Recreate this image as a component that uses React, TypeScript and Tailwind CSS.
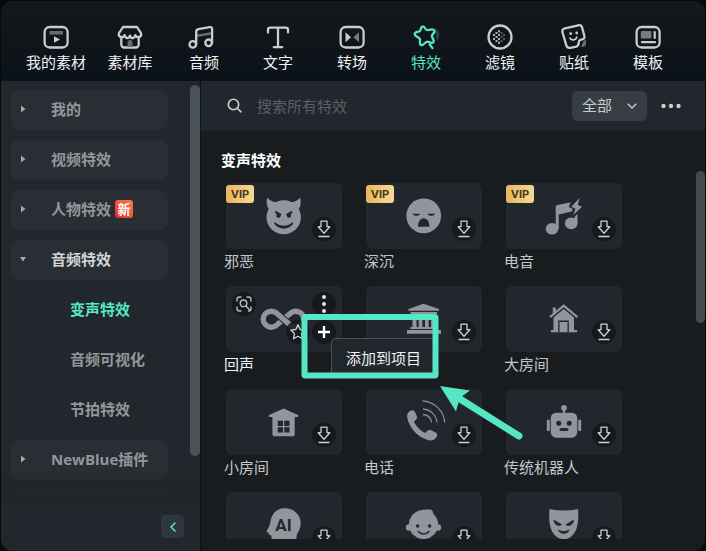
import { useState, type ReactNode } from "react";

const icons = {
  media: (
    <>
      <rect x="4.6" y="4" width="23" height="20.5" rx="5" />
      <rect x="9.5" y="8" width="13.5" height="3.6" fill="#666b72" stroke="none" />
      <path d="M14 13.2v6.6l6-3.3z" fill="#c9cdd2" stroke="none" />
    </>
  ),
  stock: (
    <>
      <path d="M9 4h14l4 6.2c.8 2.2-.6 3.9-2.7 3.9-1.6 0-2.4-.8-2.9-2-.6 2-1.7 3-3 3s-2-1-2.4-2.5c-.5 1.5-1.3 2.5-2.5 2.5s-2.3-1-2.9-3c-.5 1.2-1.3 2-2.9 2-2.1 0-3.5-1.7-2.7-3.9z" />
      <path d="M7.3 14v7.5a3 3 0 0 0 3 3h11.4a3 3 0 0 0 3-3V14" />
      <path d="M13.5 24v-4.5a2.5 2.5 0 0 1 5 0V24z" fill="#666b72" stroke="none" />
    </>
  ),
  audio: (
    <>
      <path d="m9 14 15-2.5V9L9 11.5z" fill="#666b72" stroke="none" />
      <circle cx="4.8" cy="21.4" r="3.3" />
      <circle cx="20.6" cy="19.8" r="3.3" />
      <path d="M8.2 21V9c0-1.5.7-2.5 2.2-2.8l11.2-2.1c1.5-.3 2.5.5 2.5 2V20" />
    </>
  ),
  text: (
    <path d="M6 9.5V6.7C6 5.3 7 4.600 8.2 4.600h15.6c1.2 0 2.2.7 2.2 2.1v2.8M16 4.600v19.5M11.8 24.2h8.4" />
  ),
  transition: (
    <>
      <rect x="4.6" y="4" width="23" height="20.5" rx="5" />
      <path d="M9.5 9.3v10l5.5-5z" fill="#c9cdd2" stroke="none" />
      <path d="M23 9.3v10l-5.5-5z" fill="#777b82" stroke="none" />
    </>
  ),
  effects: (
    <>
      <path d="M25 5c4 2 5.800 8 2.5 12.5-1-2.5-1.8-2.5-1.5-5z" fill="#1d4b44" stroke="none" />
      <path d="M12.3 3.7c1.7-.6 2.5.5 3.3 2.2.7 1.4 1.7 1.4 3.1 1 2-.6 4.5-1.2 5.5.4.9 1.5-.4 2.8-1.7 4.2-1 1.1-.8 2 0 3.3 1.1 1.9 2 3.5.7 4.7-1.2 1.1-2.8.3-4.6-.6-1.3-.7-2.2-.4-3.3.8-1.5 1.6-2.8 3-4.4 2.2-1.5-.8-1.2-2.5-.9-4.4.2-1.5-.3-2.3-1.7-3-2-1-3.9-2-3.6-3.7.3-1.6 2-1.9 3.9-2.1 1.5-.2 1.9-.9 2.1-2.3.3-1.3.4-2.3 1.6-2.7z" />
      <path d="m19.7 21.5 2.8 3.6" />
    </>
  ),
  filters: (
    <>
      <circle cx="16" cy="14" r="11.5" />
      <g fill="#aeb2b8" stroke="none">
        {[
          [10, 12], [10, 16], [12.5, 10], [12.5, 14], [12.5, 18], [15, 8.3], [15, 12], [15, 16], [15, 19.7],
        ].map(([x, y]) => (
          <rect key={`${x}-${y}`} x={x - 1} y={y - 1} width="2" height="2" />
        ))}
      </g>
      <g fill="#555a61" stroke="none">
        {[
          [17.5, 10], [17.5, 14], [17.5, 18], [20, 12], [20, 16],
        ].map(([x, y]) => (
          <rect key={`${x}-${y}`} x={x - 1} y={y - 1} width="2" height="2" />
        ))}
      </g>
    </>
  ),
  stickers: (
    <>
      <path d="M28 16.5v4.7c0 1.5-2 3-5.5 2.6 2.8-2 .5-4.5 5.5-7.3z" fill="#666b72" stroke="none" />
      <path d="m7 5.3 13.2-3c2-.4 3.4.4 3.9 2.2l2.2 8.2c.6 2.7-.4 3.5-3.2 4-1.8.3-2.2 1-2.3 2.8-.2 2.9-.9 4-3.4 4.4l-5.2.9c-2 .3-3.3-.5-3.9-2.4L4.5 9.3C4 7.2 4.9 5.800 7 5.3z" />
      <path d="M12 15.2c1.7 2.6 5.5 2.2 6.8-.9" strokeWidth="1.8" />
      <circle cx="12.7" cy="10.7" r="1.4" fill="#c9cdd2" stroke="none" />
      <circle cx="18.7" cy="10" r="1.4" fill="#c9cdd2" stroke="none" />
    </>
  ),
  templates: (
    <>
      <rect x="4.6" y="4" width="23" height="20.5" rx="5" />
      <rect x="8.8" y="8" width="10.6" height="7.6" rx="1" fill="#777b82" stroke="none" />
      <path d="M22.7 9v6M10 19.2h13" strokeWidth="2.2" />
    </>
  ),
};

const tabs = [
  { icon: icons.media, label: "我的素材" },
  { icon: icons.stock, label: "素材库" },
  { icon: icons.audio, label: "音频" },
  { icon: icons.text, label: "文字" },
  { icon: icons.transition, label: "转场" },
  { icon: icons.effects, label: "特效" },
  { icon: icons.filters, label: "滤镜" },
  { icon: icons.stickers, label: "贴纸" },
  { icon: icons.templates, label: "模板" },
];

// Artwork is drawn on the 116x66 thumbnail; dark parts reuse the card colour.
const CARD = "#21272d";

const art = {
  devil: (
    <>
      <path d="M41.3 14.5c2 2.500 4.500 4 7.500 4.600h17.800c3-.6 5.500-2.100 7.500-4.600 1.200 5 .6 9-1.600 12H43c-2.300-3-2.900-7-1.700-12z" />
      <ellipse cx="57.7" cy="34.3" rx="17.2" ry="17" />
      <g fill={CARD}>
        <path d="m49.5 27.8 6 3.3-1 2.2c-.5 2.2-3.7 2-4.1-.4l.1-2-1.5-1.3zM66 27.8l-6 3.3 1 2.2c.5 2.2 3.7 2 4.1-.4l-.1-2 1.5-1.3z" />
        <path d="M49 39c4.5 5 13 5 17.5 0 .8 1 .8 1.7.2 2.5-4.3 5.500-13.5 5.500-17.9 0-.7-.8-.7-1.6.2-2.5z" />
      </g>
    </>
  ),
  deep: (
    <>
      <circle cx="57.7" cy="32.8" r="17.4" />
      <g fill={CARD}>
        <path d="M46.5 30.7H54c-1 2.8-6.2 2.8-7.5 0zM61.5 30.7H69c-1 2.8-6.2 2.8-7.5 0z" />
        <path d="M52 43.8c-.3-5 2.5-8.500 5.700-8.500s6 3.5 5.700 8.500z" />
      </g>
    </>
  ),
  electro: (
    <>
      <ellipse cx="46" cy="45.8" rx="6.3" ry="5.8" />
      <ellipse cx="65.2" cy="40.4" rx="6.3" ry="5.8" />
      <path d="M49.7 24.5c0-1.500.6-2.200 2-2.500l13-2.800-2 4.5 4 2.300-1 2.500-13 3v14.800h-3zM68.5 34l3-3.300V41h-3z" />
      <path d="m73.5 15-8.200 8.700 4.200 2-2.500 6.500 9-8.500-4.200-2z" />
    </>
  ),
  infinity: (
    <g fill="none">
      <path
        d="M64.500 27.200a8 8 0 1 1 0 12M50.500 39.200a8 8 0 1 1 0-12M50.500 39.200l14-12"
        stroke="#91969e"
        strokeWidth="5.400"
      />
      <path d="m52 28.500 11.500 10" stroke={CARD} strokeWidth="7.400" />
      <path d="m49.500 26.300 16 13.800" stroke="#91969e" strokeWidth="5.400" />
    </g>
  ),
  hall: (
    <>
      <path d="M57.5 17.8 73 23v1.700H42.5V23zM44.5 26H71v2H44.5z" />
      <path d="M46.5 28h4v14h-4zM52.7 28h3.700v14h-3.700zM59 28h3.700v14H59zM65 28h4v14h-4zM44.5 41H71v2H44.5zM41 44h34v3.700H41z" />
    </>
  ),
  house: (
    <>
      <path d="m44 31.2 13.7-11.5 13.7 11.5" fill="none" stroke="#91969e" strokeWidth="2.4" />
      <path d="M46.8 21.5h3v4l-3 2.5zM57.7 23 68 31.5V44h3v2.200H45V44h2.500V31.500z" />
      <path d="M52.2 46.2V34.5h10.600v11.700h-1.300V36h-8v10.200z" fill={CARD} />
    </>
  ),
  cabin: (
    <>
      <path d="M57.6 19.5 72 26c.5 1 .5 1.7-.3 2h-3v16.700c0 1.800-.8 2.600-2.600 2.600H49c-1.800 0-2.600-.8-2.600-2.600V28h-3c-.8-.3-.8-1-.3-2z" />
      <path d="M51.7 31.7H57V37h-5.300zM58.3 31.7h5.200V37h-5.200zM51.7 38.300H57v5.200h-5.300zM58.3 38.300h5.200v5.200h-5.200z" fill={CARD} />
    </>
  ),
  phone: (
    <>
      <path d="M44.5 21.7c2-1 3.700-.4 4.600 1.500l1.800 4c.7 1.700 0 3-1.700 4.200-1 .7-1.200 1.400-.7 2.400 2.300 4 5.500 7.500 9.500 9.700 1.200.6 1.900.3 2.600-.7 1.200-1.800 2.700-2.300 4.500-1.500l4 2c2.200 1 2.500 2.500 1.700 4.200-1.700 3.500-5.200 4.700-9 3.500C51.500 48 43 38.500 41.200 28.500c-.5-3 .6-5.500 3.300-6.800z" />
      <g fill="none" stroke="#858a92" strokeWidth="1.3">
        <path d="M56.5 12c12 .5 21.500 10 22.300 21.500M57 20c7.500.5 13.300 6 14 13.500M57 25.500c4.500.5 8 3.500 8.700 8" />
      </g>
    </>
  ),
  robot: (
    <>
      <circle cx="58" cy="19" r="2.9" />
      <path d="M57 20h2v5h-2z" />
      <rect x="44.7" y="23.7" width="26.6" height="25" rx="5.5" />
      <rect x="40.8" y="30.7" width="3" height="11.3" rx="1" />
      <rect x="72.2" y="30.7" width="3" height="11.3" rx="1" />
      <g fill={CARD}>
        <circle cx="52.7" cy="34.2" r="2.5" />
        <circle cx="63.2" cy="34.2" r="2.5" />
        <rect x="53.5" y="38.9" width="9" height="3.2" rx="1.6" />
      </g>
    </>
  ),
  ai: (
    <>
      <path d="M45.5 51v-7.500c-1.700.1-2.500-.6-2.600-2.500-2.200-.5-2.500-1.800-1.500-3.500 1.500-2.400 2.500-4.500 3-7.500 1.500-9 6.500-13.800 14-13.800 9 0 16.300 6 16.300 15 0 5-2.400 8.500-4.200 12.500V51z" />
      <text x="57.5" y="39" textAnchor="middle" fill={CARD} fontSize="17" fontWeight="700" fontFamily="Roboto, sans-serif">
        AI
      </text>
    </>
  ),
  child: (
    <>
      <circle cx="57.5" cy="32.5" r="14.6" />
      <path d="M55 18c4-.8 8-.7 10-.2 2 .8 2 2.500 2 4z" />
      <circle cx="43" cy="35.5" r="3.2" />
      <circle cx="72" cy="35.5" r="3.2" />
      <circle cx="51.7" cy="34" r="1.7" fill={CARD} />
      <circle cx="63.7" cy="34" r="1.7" fill={CARD} />
      <path d="M52.5 39.5c2.800 3.400 7.700 3.400 10.500 0" fill="none" stroke={CARD} strokeWidth="1.5" strokeLinecap="round" />
    </>
  ),
  mask: (
    <>
      <path d="M43.5 17c9.500 2 19 2 28.500 0 .7 9 .2 17.500-3 23-2.300 4-6.500 7.300-11.300 7.300S48.700 44 46.400 40C43.300 34.500 42.800 26 43.500 17z" />
      <g fill={CARD}>
        <path d="m47.5 27.5 8.500 5c-2 2.700-8.200 1.200-8.500-5zM68 27.500l-8.500 5c2 2.700 8.200 1.200 8.500-5z" />
        <path d="M51.500 37c3.700 2.800 8.800 2.800 12.500 0-1.500 6-10.500 6.500-12.500 0z" />
      </g>
    </>
  ),
};

interface Effect {
  name?: string;
  art: ReactNode;
  vip?: boolean;
  hovered?: boolean;
}

const effects: Effect[] = [
  { name: "邪恶", art: art.devil, vip: true },
  { name: "深沉", art: art.deep, vip: true },
  { name: "电音", art: art.electro, vip: true },
  { name: "回声", art: art.infinity, hovered: true },
  { art: art.hall },
  { name: "大房间", art: art.house },
  { name: "小房间", art: art.cabin },
  { name: "电话", art: art.phone },
  { name: "传统机器人", art: art.robot },
  { art: art.ai },
  { art: art.child },
  { art: art.mask },
];

const groups = [
  { label: "我的" },
  { label: "视频特效" },
  { label: "人物特效", isNew: true },
  { label: "音频特效", children: ["变声特效", "音频可视化", "节拍特效"] },
  { label: "NewBlue插件" },
  { label: "" },
];

const round = "absolute flex size-6 items-center justify-center rounded-full bg-[#14181b]/85";

function DownloadIcon() {
  return (
    <svg viewBox="0 0 18 20" className="h-5 w-[18px]" fill="none" stroke="#cdd1d5" strokeWidth="1.3">
      <path d="M6 2.200h6v5.500h2.800L9 14.200 3.200 7.700H6z" strokeLinejoin="round" />
      <path d="M3.500 17.500h11" strokeWidth="1.5" />
    </svg>
  );
}

function HoverControls() {
  return (
    <>
      <button aria-label="预览" className={`${round} left-1.5 top-1.5`}>
        <svg viewBox="0 0 18 18" className="size-[18px]" fill="none" stroke="#b9bdc2" strokeWidth="1.4" strokeLinecap="round">
          <path d="M2 6V4.500A2.500 2.500 0 0 1 4.500 2H6M12 2h1.500A2.500 2.500 0 0 1 16 4.500V6M16 12v1.500a2.500 2.500 0 0 1-2.500 2.500M6 16H4.500A2.500 2.500 0 0 1 2 13.500V12" />
          <circle cx="8.5" cy="8.3" r="3.3" />
          <path d="m11 11 3 3.200" />
        </svg>
      </button>
      <button aria-label="更多" className={`${round} right-1.5 top-1.5`}>
        <svg viewBox="0 0 6 20" className="h-5 w-1.5" fill="#e2e4e7">
          <circle cx="3" cy="3" r="2" />
          <circle cx="3" cy="10" r="2" />
          <circle cx="3" cy="17" r="2" />
        </svg>
      </button>
      <button aria-label="收藏" className={`${round} bottom-2 right-8`}>
        <svg viewBox="0 0 18 18" className="size-[18px]" fill="none" stroke="#cdd1d5" strokeWidth="1.3" strokeLinejoin="round">
          <path d="m9 1.800 2.200 4.700 5.100.6-3.800 3.500 1 5.200L9 13.300l-4.500 2.500 1-5.200L1.700 7.100l5.100-.6z" />
        </svg>
      </button>
      <button aria-label="添加" className={`${round} bottom-2 right-1.5`}>
        <svg viewBox="0 0 14 14" className="size-3.5" stroke="#fff" strokeWidth="2.4">
          <path d="M7 1v12M1 7h12" />
        </svg>
      </button>
      <div
        role="tooltip"
        className="absolute left-[105px] top-[52px] z-10 flex h-10 w-[105px] items-center justify-center whitespace-nowrap rounded border border-[#4b5157] bg-[#21272d] text-[15px] text-[#f0f2f4]"
      >
        添加到项目
      </div>
      <svg viewBox="0 0 300 160" className="pointer-events-none absolute left-0 top-0 z-20 h-40 w-[300px]">
        <rect x="78.500" y="31" width="131" height="58.500" rx="1" fill="none" stroke="#56e5c5" strokeWidth="6" />
        <path d="m234 113 59 37" stroke="#56e5c5" strokeWidth="7" strokeLinecap="round" />
        <path d="m214 100 30 4.500-7.500 5.500-4 6.500-2.500 9z" fill="#56e5c5" />
      </svg>
    </>
  );
}

function EffectCard({ name, art, vip, hovered }: Effect) {
  return (
    <li className="h-[103px]">
      <div className="relative h-[66px] rounded-md bg-[#21272d]">
        <svg viewBox="0 0 116 66" className="h-full w-full" fill="#91969e">
          {art}
        </svg>
        {vip && (
          <span className="absolute left-0 top-0.5 flex h-[18px] w-7 items-center justify-center rounded-[3px] bg-linear-to-r from-[#e7b65c] to-[#f8d894] font-['Inter'] text-[11px] font-bold text-[#493817]">
            VIP
          </span>
        )}
        {hovered ? (
          <HoverControls />
        ) : (
          <button aria-label="下载" className={`${round} bottom-2 right-1.5`}>
            <DownloadIcon />
          </button>
        )}
      </div>
      {name && (
        <p className={`-ml-0.5 mt-px text-[15px] leading-[22px] ${hovered ? "text-[#f0f2f4]" : "text-[#c3c7cb]"}`}>
          {name}
        </p>
      )}
    </li>
  );
}

function Sidebar() {
  const [active, setActive] = useState("变声特效");

  return (
    <aside className="flex w-[200px] shrink-0 flex-col border-r border-[#101316] bg-[#21272d]">
      <div className="relative min-h-0 flex-1 overflow-hidden pl-2.5 pt-[9px]">
        <nav className="flex w-[157px] flex-col gap-2.5">
          {groups.map((group) => (
            <div key={group.label}>
              <button
                aria-expanded={!!group.children}
                className={`flex h-10 w-full items-center rounded-lg bg-[#292e34] pb-0.5 text-[15px] font-bold ${
                  group.children ? "text-[#d2d5d8]" : "text-[#92979c]"
                }`}
              >
                {group.label && (
                  <svg viewBox="0 0 8 8" className="ml-2 mr-6 size-2 shrink-0" fill="#a5a9ae">
                    {group.children ? <path d="M1 2h6L4 6.500z" /> : <path d="M2 .5v7L6.500 4z" />}
                  </svg>
                )}
                {group.label}
                {group.isNew && (
                  <span className="ml-1 flex size-[18px] items-center justify-center rounded-[3px] bg-linear-to-tr from-[#e3232b] to-[#fb7b46] text-[13px] leading-none text-white">
                    新
                  </span>
                )}
              </button>
              {group.children?.map((child) => (
                <button
                  key={child}
                  onClick={() => setActive(child)}
                  className={`mt-2.5 flex h-10 w-full items-center pb-0.5 pl-[59px] text-[15px] font-bold ${
                    active === child ? "text-[#56e5c5]" : "text-[#92979c]"
                  }`}
                >
                  {child}
                </button>
              ))}
            </div>
          ))}
        </nav>
        <div className="absolute inset-x-0 bottom-0 h-8 bg-linear-to-b from-transparent to-[#202325]/90" />
        <div className="absolute bottom-[46px] right-0 top-1 w-2.5 rounded-full bg-[#495259]" />
      </div>
      <div className="flex h-[49px] shrink-0 items-center justify-end pr-4">
        <button aria-label="收起" className="flex size-[23px] items-center justify-center rounded bg-[#30363d]">
          <svg viewBox="0 0 12 12" className="size-3" fill="none" stroke="#56e5c5" strokeWidth="1.5">
            <path d="M8.500 1.500 4 6l4.500 4.500" />
          </svg>
        </button>
      </div>
    </aside>
  );
}

export default function App() {
  return (
    <div className="h-screen bg-[#07090b] p-px pb-0 font-['Open_Sans','Noto_Sans_CJK_SC',sans-serif]">
      <div className="flex h-full flex-col overflow-hidden rounded-xl bg-[#191c1f]">
        <header className="h-20 shrink-0 bg-linear-to-b from-[#15181c] to-[#0a1219] pl-[18px] pr-5">
          <nav className="grid h-full grid-cols-9">
            {tabs.map((tab) => {
              const active = tab.label === "特效";
              return (
                <button
                  key={tab.label}
                  className={`flex flex-col items-center pt-[22px] text-[15px] leading-[22px] whitespace-nowrap ${
                    active ? "text-[#56e5c5]" : "text-[#f0f2f4]"
                  }`}
                >
                  <svg
                    viewBox="0 0 32 28"
                    className="h-7 w-8 shrink-0"
                    fill="none"
                    stroke={active ? "#56e5c5" : "#c9cdd2"}
                    strokeWidth="2.3"
                    strokeLinecap="round"
                    strokeLinejoin="round"
                  >
                    {tab.icon}
                  </svg>
                  {tab.label}
                </button>
              );
            })}
          </nav>
        </header>

        <div className="flex min-h-0 flex-1">
          <Sidebar />

          <main className="relative flex min-w-0 flex-1 flex-col pb-3">
            <div className="flex h-[50px] shrink-0 items-center bg-[#21272d] px-6">
              <svg viewBox="0 0 16 16" className="ml-0.5 size-4 shrink-0" fill="none" stroke="#c9cdd2" strokeWidth="1.6">
                <circle cx="6.500" cy="6.500" r="5.200" />
                <path d="m10.500 10.500 4 3.800" />
              </svg>
              <input
                type="text"
                aria-label="搜索所有特效"
                placeholder="搜索所有特效"
                className="ml-3.5 min-w-0 flex-1 bg-transparent text-[15px] text-white outline-none placeholder:text-[#5a6067]"
              />
              <div className="relative">
                <select
                  aria-label="筛选"
                  className="h-[30px] w-[75px] appearance-none rounded-md bg-[#363d43] pb-0.5 pl-2.5 text-[15px] text-[#c9cdd2]"
                >
                  <option>全部</option>
                </select>
                <svg viewBox="0 0 10 6" className="pointer-events-none absolute right-2.5 top-3 h-1.5 w-2.5" fill="none" stroke="#c9cdd2" strokeWidth="1.3">
                  <path d="m.8.8 4.200 4.200L9.200.8" />
                </svg>
              </div>
              <button aria-label="更多选项" className="ml-3.5">
                <svg viewBox="0 0 20 6" className="h-1.5 w-5" fill="#c9cdd2">
                  <circle cx="2.5" cy="3" r="2.2" />
                  <circle cx="10" cy="3" r="2.2" />
                  <circle cx="17.5" cy="3" r="2.2" />
                </svg>
              </button>
            </div>

            <section className="min-h-0 flex-1 overflow-hidden pl-6 pt-[18px]">
              <h2 className="-ml-1 text-[15px] font-bold leading-[22px] text-white">变声特效</h2>
              <ul className="mt-3 grid grid-cols-[repeat(auto-fill,116px)] gap-x-6 pl-px">
                {effects.map((effect, i) => (
                  <EffectCard key={i} {...effect} />
                ))}
              </ul>
            </section>
            <div className="absolute right-0 top-[90px] h-[152px] w-[9px] rounded-full bg-[#434a50]" />
          </main>
        </div>
      </div>
    </div>
  );
}
